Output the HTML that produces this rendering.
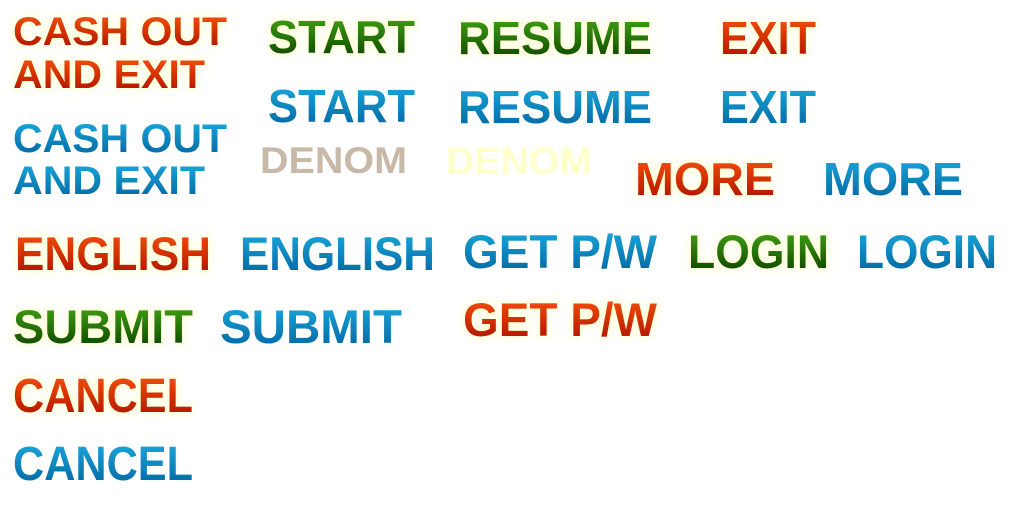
<!DOCTYPE html>
<html><head><meta charset="utf-8"><style>
html,body{margin:0;padding:0;background:#fff;width:1024px;height:512px;overflow:hidden}
svg{display:block}
text{font-family:"Liberation Sans",sans-serif;font-weight:bold}
</style></head><body>
<svg width="1024" height="512" viewBox="0 0 1024 512">
<defs>
<linearGradient id="r" x1="0" y1="0" x2="0" y2="1"><stop offset="0.15" stop-color="#f04a08"/><stop offset="1" stop-color="#a80c00"/></linearGradient>
<linearGradient id="g" x1="0" y1="0" x2="0" y2="1"><stop offset="0.15" stop-color="#3c9c0c"/><stop offset="1" stop-color="#083c00"/></linearGradient>
<linearGradient id="b" x1="0" y1="0" x2="0" y2="1"><stop offset="0.15" stop-color="#18a2d6"/><stop offset="1" stop-color="#00609c"/></linearGradient>
<filter id="gl" x="-10%" y="-30%" width="120%" height="160%">
<feMorphology in="SourceAlpha" operator="dilate" radius="1.5" result="d"/>
<feGaussianBlur in="d" stdDeviation="4" result="bl"/>
<feFlood flood-color="#ffffb0" flood-opacity="0.55"/>
<feComposite in2="bl" operator="in" result="gw"/>
<feMerge><feMergeNode in="gw"/><feMergeNode in="SourceGraphic"/></feMerge>
</filter>
</defs>
<g filter="url(#gl)">
<text x="13" y="45" font-size="40" textLength="214" lengthAdjust="spacingAndGlyphs" fill="url(#r)">CASH OUT</text>
<text x="13" y="88" font-size="40" textLength="192" lengthAdjust="spacingAndGlyphs" fill="url(#r)">AND EXIT</text>
<text x="268" y="53" font-size="46" textLength="147" lengthAdjust="spacingAndGlyphs" fill="url(#g)">START</text>
<text x="458" y="54" font-size="46" textLength="194" lengthAdjust="spacingAndGlyphs" fill="url(#g)">RESUME</text>
<text x="720" y="54" font-size="46" textLength="96" lengthAdjust="spacingAndGlyphs" fill="url(#r)">EXIT</text>
<text x="635" y="195" font-size="46" textLength="140" lengthAdjust="spacingAndGlyphs" fill="url(#r)">MORE</text>
<text x="15" y="270" font-size="47" textLength="196" lengthAdjust="spacingAndGlyphs" fill="url(#r)">ENGLISH</text>
<text x="688" y="268" font-size="47" textLength="141" lengthAdjust="spacingAndGlyphs" fill="url(#g)">LOGIN</text>
<text x="463" y="336" font-size="47" textLength="194" lengthAdjust="spacingAndGlyphs" fill="url(#r)">GET P/W</text>
<text x="13" y="343" font-size="47" textLength="180" lengthAdjust="spacingAndGlyphs" fill="url(#g)">SUBMIT</text>
<text x="13" y="412" font-size="48" textLength="180" lengthAdjust="spacingAndGlyphs" fill="url(#r)">CANCEL</text>
</g>
<text x="13" y="152" font-size="40" textLength="214" lengthAdjust="spacingAndGlyphs" fill="url(#b)">CASH OUT</text>
<text x="13" y="194" font-size="40" textLength="192" lengthAdjust="spacingAndGlyphs" fill="url(#b)">AND EXIT</text>
<text x="268" y="122" font-size="46" textLength="147" lengthAdjust="spacingAndGlyphs" fill="url(#b)">START</text>
<text x="458" y="123" font-size="46" textLength="194" lengthAdjust="spacingAndGlyphs" fill="url(#b)">RESUME</text>
<text x="720" y="123" font-size="46" textLength="96" lengthAdjust="spacingAndGlyphs" fill="url(#b)">EXIT</text>
<text x="260" y="173" font-size="37" textLength="147" lengthAdjust="spacingAndGlyphs" fill="#c8b8a8">DENOM</text>
<text x="446" y="174" font-size="38" textLength="146" lengthAdjust="spacingAndGlyphs" fill="#ffffcc">DENOM</text>
<text x="823" y="195" font-size="46" textLength="140" lengthAdjust="spacingAndGlyphs" fill="url(#b)">MORE</text>
<text x="240" y="270" font-size="47" textLength="195" lengthAdjust="spacingAndGlyphs" fill="url(#b)">ENGLISH</text>
<text x="463" y="268" font-size="47" textLength="194" lengthAdjust="spacingAndGlyphs" fill="url(#b)">GET P/W</text>
<text x="857" y="268" font-size="47" textLength="140" lengthAdjust="spacingAndGlyphs" fill="url(#b)">LOGIN</text>
<text x="220" y="343" font-size="47" textLength="182" lengthAdjust="spacingAndGlyphs" fill="url(#b)">SUBMIT</text>
<text x="13" y="480" font-size="48" textLength="180" lengthAdjust="spacingAndGlyphs" fill="url(#b)">CANCEL</text>
</svg>
</body></html>
